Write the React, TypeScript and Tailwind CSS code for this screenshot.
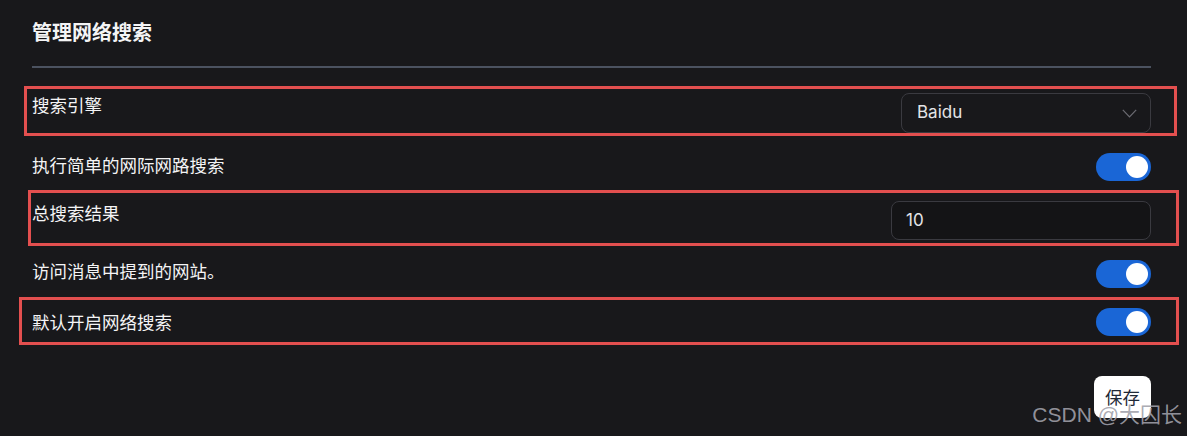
const cjk = { fontFamily: '"Noto Sans CJK SC", "Noto Sans", sans-serif' }

function Toggle() {
  return (
    <div className="w-[55px] h-[28px] rounded-full bg-[#1a66d6] flex items-center justify-end pr-[3px]">
      <div className="w-[22px] h-[22px] rounded-full bg-white" />
    </div>
  )
}

function Mark({ className }: { className: string }) {
  return <div className={`absolute border-[3px] border-[#e34f4f] pointer-events-none ${className}`} />
}

export default function App() {
  return (
    <div className="relative w-[1187px] h-[436px] bg-[#18181b] text-[#f4f4f5] overflow-hidden" style={cjk}>
      <div className="pl-[32px] pr-[36px] pt-[18px]">
        <div className="text-[20px] leading-[28px] font-bold">管理网络搜索</div>
        <div className="mt-[20px] h-[2px] bg-[#4b5260]" />

        <div className="mt-[25px] flex flex-col gap-[20px]">
          <div className="relative flex justify-between items-start">
            <Mark className="-left-[8px] -right-[26px] -top-[7px] -bottom-[3px]" />
            <div className="text-[17.5px] leading-[24px]">搜索引擎</div>
            <div className="w-[250px] h-[40px] rounded-[8px] border border-[#3a3a40] flex items-center justify-between pl-[15px] pr-[13px]">
              <span className="text-[17px] text-[#e4e4e7]" style={{ fontFamily: 'Inter, "Liberation Sans", sans-serif' }}>
                Baidu
              </span>
              <svg width="15" height="9" viewBox="0 0 15 9" fill="none" className="mt-[1px]">
                <path d="M0.8 0.8 L7.5 7.8 L14.2 0.8" stroke="#6b6b72" strokeWidth="1.2" />
              </svg>
            </div>
          </div>

          <div className="flex justify-between items-center">
            <div className="text-[17.5px] leading-[24px] -mt-[4px]">执行简单的网际网路搜索</div>
            <Toggle />
          </div>

          <div className="relative flex justify-between items-start">
            <Mark className="-left-[4px] -right-[28px] -top-[11px] -bottom-[6px]" />
            <div className="text-[17.5px] leading-[24px]">总搜索结果</div>
            <div className="w-[260px] h-[39px] rounded-[8px] border border-[#3a3a40] bg-[#141416] flex items-center pl-[14px]">
              <span className="text-[17px] text-[#e4e4e7]" style={{ fontFamily: 'Inter, "Liberation Sans", sans-serif' }}>
                10
              </span>
            </div>
          </div>

          <div className="flex justify-between items-center">
            <div className="text-[17.5px] leading-[24px] -mt-[6px]">访问消息中提到的网站。</div>
            <Toggle />
          </div>

          <div className="relative flex justify-between items-center">
            <Mark className="-left-[13px] -right-[28px] -top-[11px] -bottom-[9px]" />
            <div className="text-[17.5px] leading-[24px]">默认开启网络搜索</div>
            <Toggle />
          </div>
        </div>

        <div className="mt-[40px] flex justify-end">
          <button type="button" className="w-[57px] h-[42px] rounded-[8px] bg-white text-[#1f2937] text-[17.5px]">
            保存
          </button>
        </div>
      </div>

      <div
        className="absolute right-[5px] bottom-[8px] text-[21px] leading-[26px] text-[#a1a1aa]/90"
        style={{ fontFamily: '"Liberation Sans", "Noto Sans CJK SC", sans-serif' }}
      >
        CSDN @大囚长
      </div>
    </div>
  )
}
